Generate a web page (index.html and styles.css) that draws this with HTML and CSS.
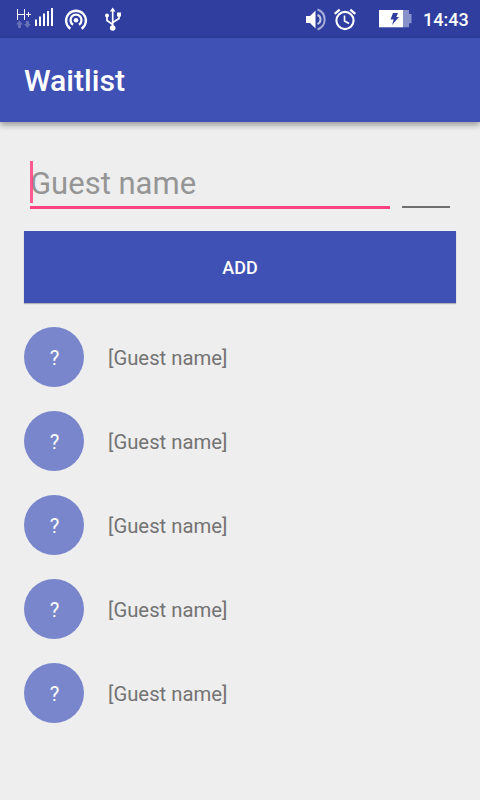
FILE: index.html
```html
<!DOCTYPE html>
<html lang="en">
<head>
<meta charset="utf-8">
<title>Waitlist</title>
<link rel="stylesheet" href="styles.css">
</head>
<body>
<header class="status">
  <svg class="signal" width="40" height="38" viewBox="0 0 40 38">
    <path d="M1.500 9v11M8.500 9v11M1.500 14.500h7M10 14.500h5M12.500 12v5" fill="none" stroke="#fff" stroke-width="1"/>
    <path d="M3.500 20.500l3.500 4H5V28H2v-3.500H0zM11.500 28L8 24h2v-3h3v3h2z" fill="#6671b8"/>
    <path d="M19 19.500h2V26h-2zM23 16.500h2V26h-2zM27 13.500h2V26h-2zM31 11h2v15h-2zM35 8h2v18h-2z" fill="#fff"/>
  </svg>
  <svg class="hotspot" width="24" height="38" viewBox="0 0 24 38">
    <path d="M6.400 28.800a9.900 9.900 0 1 1 11.200 0M9 24.800a5.500 5.500 0 1 1 6 0" fill="none" stroke="#fff" stroke-width="2.300"/>
    <circle cx="12" cy="20.300" r="2.300" fill="#fff"/>
  </svg>
  <svg class="usb" width="18" height="38" viewBox="0 0 18 38">
    <path d="M8.700 27V10M8.700 24.500L3 20.500V16M8.700 22.500L15 18.500V15" fill="none" stroke="#fff" stroke-width="1.700"/>
    <path d="M8.700 7.500l2.800 4H5.900zM13 12.500h4v4h-4z" fill="#fff"/>
    <circle cx="3" cy="15.500" r="2" fill="#fff"/><circle cx="8.700" cy="28" r="2.800" fill="#fff"/>
  </svg>
  <svg class="volume" width="22" height="38" viewBox="0 0 22 38">
    <path d="M1 16h4l5.500-5.500v18L5 23H1z" fill="#fff"/>
    <path d="M12.500 15c4 1.500 4 7.500 0 9" fill="none" stroke="#c5c9e6" stroke-width="2"/>
    <path d="M12.500 9.500c9.500 3.500 9.500 16.500 0 20" fill="none" stroke="#a6addb" stroke-width="2"/>
  </svg>
  <svg class="alarm" width="24" height="38" viewBox="0 0 24 38">
    <circle cx="12" cy="20.500" r="8.600" fill="none" stroke="#fff" stroke-width="2.100"/>
    <path d="M1.700 13.800l5-4.200M22.300 13.800l-5-4.200" fill="none" stroke="#fff" stroke-width="2.300"/>
    <path d="M11.500 15.500v5.500l4.500 2.500" fill="none" stroke="#fff" stroke-width="1.600"/>
  </svg>
  <svg class="battery" width="33" height="38" viewBox="0 0 33 38">
    <path d="M0 10h24v17.300H0z" fill="#fff"/>
    <path d="M24 10h6v4h2.500v9.300H30v4h-6z" fill="#8991ca"/>
    <path d="M14 13h5l-1.700 4H20l-7 8 1.700-5.500H11.500z" fill="#303f9f"/>
  </svg>
  <span class="clock">14:43</span>
</header>
<div class="appbar"><h1>Waitlist</h1></div>
<main>
  <div class="fields">
    <div class="field field-name"><span class="hint">Guest name</span><i class="caret"></i></div>
    <div class="field field-count"></div>
  </div>
  <button class="add" type="button">ADD</button>
  <ul class="guests">
    <li><span class="badge">?</span><span class="name">[Guest name]</span></li>
    <li><span class="badge">?</span><span class="name">[Guest name]</span></li>
    <li><span class="badge">?</span><span class="name">[Guest name]</span></li>
    <li><span class="badge">?</span><span class="name">[Guest name]</span></li>
    <li><span class="badge">?</span><span class="name">[Guest name]</span></li>
  </ul>
</main>
</body>
</html>
```
FILE: styles.css
```css
* { box-sizing: border-box; }
body {
  margin: 0;
  height: 800px;
  overflow: hidden;
  background: #eee;
  font-family: Roboto, sans-serif;
}
.status {
  display: flex;
  height: 38px;
  background: #303f9f;
  color: #fff;
  padding-left: 16px;
}
.status svg { flex: none; display: block; }
.hotspot { margin-left: 8px; }
.usb { margin-left: 16px; }
.volume { margin-left: 183px; }
.alarm { margin-left: 6px; }
.battery { margin-left: 22px; }
.clock {
  margin-left: 11px;
  font-size: 18px;
  font-weight: 500;
  line-height: 40px;
}
.appbar {
  display: flex;
  align-items: center;
  height: 84px;
  padding: 2px 0 0 24px;
  background: #3f51b5;
  box-shadow: 0 3px 6px rgba(0, 0, 0, .36);
}
h1 {
  margin: 0;
  color: #fff;
  font-size: 30.200px;
  font-weight: 500;
  line-height: 36px;
}
main { padding: 39px 24px 0; }
.fields {
  display: flex;
  gap: 12px;
  height: 70px;
  padding: 0 6px;
}
.field { position: relative; }
.field-name {
  width: 360px;
  height: 48px;
  border-bottom: 3px solid #ff4081;
}
.field-count {
  width: 48px;
  height: 47px;
  border-bottom: 2px solid #707070;
}
.hint {
  display: block;
  color: #959595;
  font-size: 31px;
  line-height: 45px;
  white-space: nowrap;
}
.caret {
  position: absolute;
  left: 0;
  top: 0;
  width: 3px;
  height: 42px;
  background: rgba(255, 64, 129, .85);
}
.add {
  display: block;
  width: 100%;
  height: 72px;
  padding: 2px 0 0;
  border: 0;
  background: #3f51b5;
  box-shadow: 0 1px 1px rgba(0, 0, 0, .25);
  color: #fff;
  font: 500 18px/24px Roboto, sans-serif;
}
.guests {
  display: flex;
  flex-direction: column;
  gap: 24px;
  margin: 24px 0 0;
  padding: 0;
  list-style: none;
}
.guests li {
  display: flex;
  align-items: center;
  gap: 24px;
  height: 60px;
}
.badge {
  width: 60px;
  height: 60px;
  padding-left: 1px;
  border-radius: 50%;
  background: #7986cb;
  color: #fff;
  font-size: 20.300px;
  line-height: 62px;
  text-align: center;
}
.name {
  padding-top: 2px;
  color: #737373;
  font-size: 20.300px;
  line-height: 60px;
}
```
